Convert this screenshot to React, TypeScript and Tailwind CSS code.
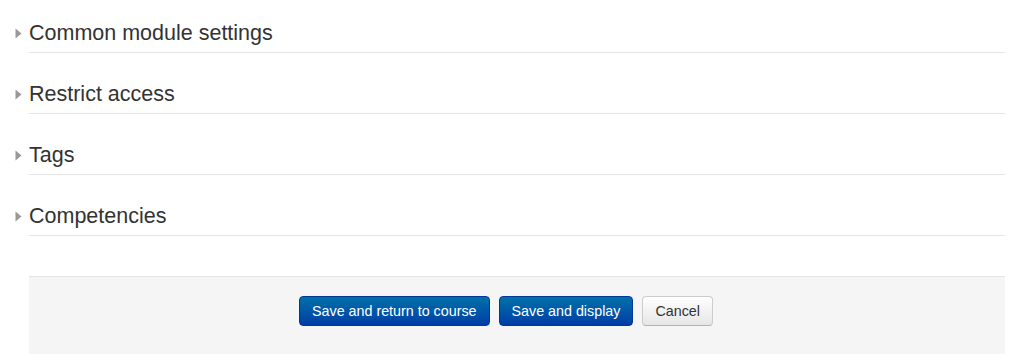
const sections = ["Common module settings", "Restrict access", "Tags", "Competencies"];

function Section({ title }: { title: string }) {
  return (
    <div className="mb-5 flex">
      <div className="flex w-[29px] items-center pl-[15px]">
        <svg width="7" height="11" viewBox="0 0 7 11" className="mt-[2px]">
          <polygon points="0.5,0.5 6.5,5.5 0.5,10.5" fill="#999" />
        </svg>
      </div>
      <div className="flex-1 border-b border-[#e5e5e5] pt-[2px] text-[21.5px] leading-[38px] text-[#333]">
        {title}
      </div>
    </div>
  );
}

export default function App() {
  return (
    <div className="min-h-[354px] bg-white pt-3 pr-[15px] font-['Liberation_Sans',Arial,sans-serif]">
      {sections.map((s) => (
        <Section key={s} title={s} />
      ))}

      <div className="mt-10 ml-[29px] border-t border-[#e5e5e5] bg-[#f5f5f5] pt-[19px] pb-[30px] pl-[270px]">
        <div className="flex gap-[9px]">
          <button className="h-[30px] rounded-[4px] border border-[#00389a] bg-gradient-to-b from-[#0070a8] to-[#003ca6] px-3 text-[14.3px] leading-5 text-white">
            Save and return to course
          </button>
          <button className="h-[30px] rounded-[4px] border border-[#00389a] bg-gradient-to-b from-[#0070a8] to-[#003ca6] px-3 text-[14.3px] leading-5 text-white">
            Save and display
          </button>
          <button className="h-[30px] rounded-[4px] border border-[#ccc] border-b-[#b3b3b3] bg-gradient-to-b from-white to-[#e6e6e6] px-3 text-[14.3px] leading-5 text-[#333]">
            Cancel
          </button>
        </div>
      </div>
    </div>
  );
}
